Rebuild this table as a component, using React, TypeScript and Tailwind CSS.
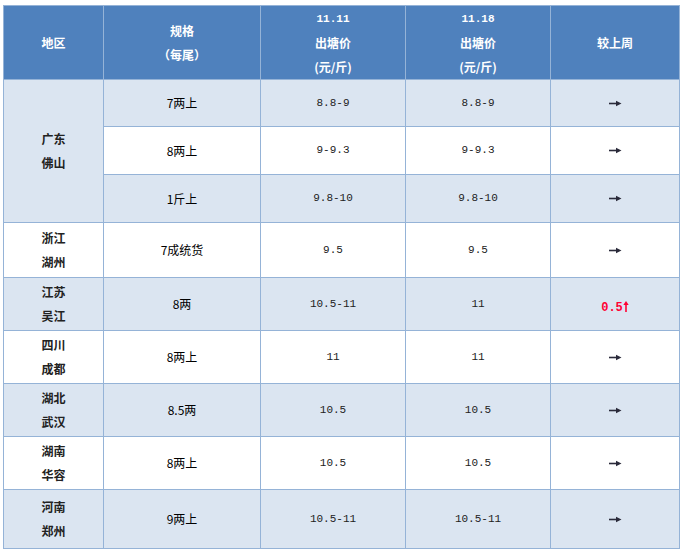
const rows = [
  { region: ["广东", "佛山"], span: 3, spec: "7两上", a: "8.8-9", b: "8.8-9", h: "h-[47px]", alt: true },
  { spec: "8两上", a: "9-9.3", b: "9-9.3", h: "h-[48px]", alt: false },
  { spec: "1斤上", a: "9.8-10", b: "9.8-10", h: "h-[48px]", alt: true },
  { region: ["浙江", "湖州"], span: 1, spec: "7成统货", a: "9.5", b: "9.5", h: "h-[55px]", alt: false },
  { region: ["江苏", "吴江"], span: 1, spec: "8两", a: "10.5-11", b: "11", h: "h-[53px]", alt: true, up: "0.5" },
  { region: ["四川", "成都"], span: 1, spec: "8两上", a: "11", b: "11", h: "h-[53px]", alt: false },
  { region: ["湖北", "武汉"], span: 1, spec: "8.5两", a: "10.5", b: "10.5", h: "h-[53px]", alt: true },
  { region: ["湖南", "华容"], span: 1, spec: "8两上", a: "10.5", b: "10.5", h: "h-[53px]", alt: false },
  { region: ["河南", "郑州"], span: 1, spec: "9两上", a: "10.5-11", b: "10.5-11", h: "h-[59px]", alt: true },
];

const cell = "border border-[#95b3d7] text-center align-middle p-0";
const mono = "font-['Liberation_Mono','Noto_Sans_CJK_SC',monospace] text-[11px] text-[#222]";

function Flat() {
  return (
    <svg width="13" height="7" viewBox="0 0 13 7" className="mx-auto block">
      <path d="M0 3.5 H8" stroke="#2a2a3a" strokeWidth="1.6" />
      <path d="M7 0.8 L12.5 3.5 L7 6.2 Z" fill="#2a2a3a" />
    </svg>
  );
}

function Up() {
  return (
    <svg width="6" height="11" viewBox="0 0 6 11" className="inline-block align-[-1px]">
      <path d="M3 3 V11" stroke="#ff0033" strokeWidth="1.6" />
      <path d="M0.3 4 L3 0 L5.7 4 Z" fill="#ff0033" />
    </svg>
  );
}

export default function App() {
  return (
    <div className="min-h-screen w-full bg-white pl-[3px] pt-[5px] font-['Noto_Sans_CJK_SC','Noto_Sans',sans-serif]">
      <table className="w-[676px] table-fixed border-collapse">
        <colgroup>
          <col className="w-[100px]" />
          <col className="w-[157px]" />
          <col className="w-[145px]" />
          <col className="w-[145px]" />
          <col className="w-[129px]" />
        </colgroup>
        <thead>
          <tr className="h-[74px] bg-[#4f81bd] text-[12px] font-bold leading-[24px] text-white">
            <th className={cell}>地区</th>
            <th className={cell}>
              <div>规格</div>
              <div>（每尾）</div>
            </th>
            <th className={cell}>
              <div className="font-['Liberation_Mono',monospace] text-[11px]">11.11</div>
              <div>出塘价</div>
              <div>(元/斤)</div>
            </th>
            <th className={cell}>
              <div className="font-['Liberation_Mono',monospace] text-[11px]">11.18</div>
              <div>出塘价</div>
              <div>(元/斤)</div>
            </th>
            <th className={cell}>较上周</th>
          </tr>
        </thead>
        <tbody>
          {rows.map((r, i) => (
            <tr key={i} className={`${r.h} ${r.alt ? "bg-[#dbe5f1]" : "bg-white"}`}>
              {r.region && (
                <td
                  rowSpan={r.span}
                  className={`${cell} bg-[#dbe5f1] text-[12px] font-bold leading-[24px] text-[#222] ${r.span === 1 && !r.alt ? "bg-white" : ""}`}
                >
                  <div>{r.region[0]}</div>
                  <div>{r.region[1]}</div>
                </td>
              )}
              <td className={`${cell} text-[12px] text-black`}>{r.spec}</td>
              <td className={`${cell} ${mono}`}>{r.a}</td>
              <td className={`${cell} ${mono}`}>{r.b}</td>
              <td className={cell}>
                {r.up ? (
                  <span className="font-['Liberation_Mono',monospace] text-[12px] font-bold text-[#ff0033]">
                    {r.up}
                    <Up />
                  </span>
                ) : (
                  <Flat />
                )}
              </td>
            </tr>
          ))}
        </tbody>
      </table>
    </div>
  );
}
